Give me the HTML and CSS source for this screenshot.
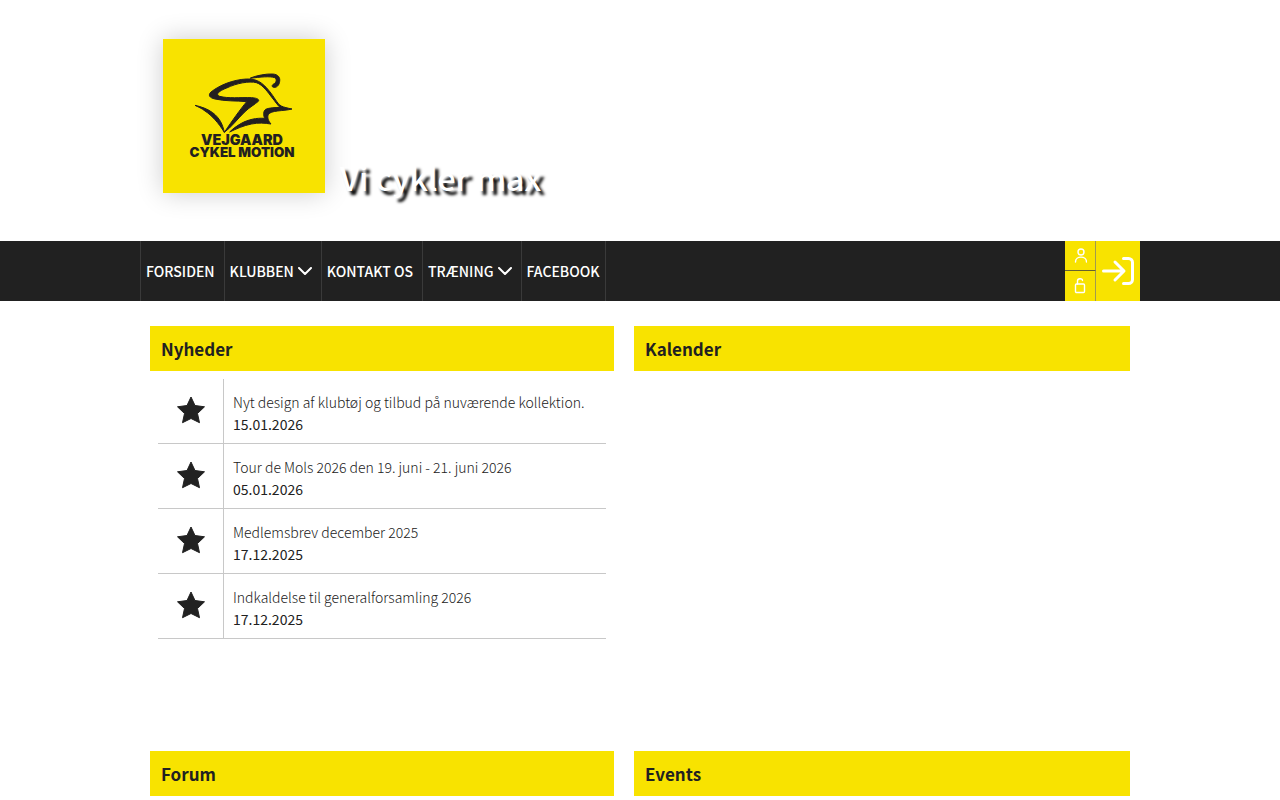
FILE: index.html
```html
<!DOCTYPE html>
<html lang="da">
<head>
    <meta charset="UTF-8">
    <meta name="viewport" content="width=device-width, initial-scale=1">
    <title>Vejgaard Cykel Motion</title>
    <link rel="stylesheet" href="styles.css">
</head>
<body>
    <header class="header">
        <div class="container header-inner">
            <a class="logo" href="#" aria-label="Vejgaard Cykel Motion">
                <svg viewBox="-51 -78 486 462">
                    <g fill="#231f20" stroke="#231f20" stroke-width="3" stroke-linejoin="round">
                        <path d="M211 39C232 31 258 26 278 27C294 28 301 37 299 49C298 60 290 69 281 67C275 66 275 60 281 57C289 53 292 43 284 38C270 33 240 36 211 40Z"/>
                        <path d="M336 132C322 129 312 127 304 123C291 116 284 97 267 77C246 51 229 41 199 42C158 44 116 62 93 81C84 90 87 98 105 102C135 109 169 107 200 110C180 134 158 165 133 202C154 187 174 160 194 141C207 128 226 117 235 109C239 103 231 99 215 98C180 97 145 101 119 94C104 88 119 77 140 69C171 54 207 48 229 53C249 59 265 84 277 99C286 110 292 120 300 127C285 128 267 128 257 133C249 139 250 151 254 160C229 158 204 164 184 175C170 183 159 191 149 201C170 191 190 182 214 177C235 173 254 174 273 177C265 168 261 157 265 149C272 135 310 139 336 132Z"/>
                        <path d="M45 121C64 125 83 132 98 143C119 159 128 178 133 202C116 174 95 151 75 138C65 130 55 126 45 121Z"/>
                    </g>
                    <text class="logo-text logo-name" x="186" y="240">VEJGAARD</text>
                    <text class="logo-text logo-sub" x="186" y="277">CYKEL MOTION</text>
                </svg>
            </a>
            <h1 class="slogan">Vi cykler max</h1>
        </div>
    </header>

    <nav class="navbar">
        <div class="container navbar-inner">
            <ul class="menu">
                <li><a href="#">FORSIDEN</a></li>
                <li><a href="#">KLUBBEN <svg class="chevron" viewBox="0 0 14 8"><path d="M1 1l6 6 6-6"/></svg></a></li>
                <li><a href="#">KONTAKT OS</a></li>
                <li><a href="#">TRÆNING <svg class="chevron" viewBox="0 0 14 8"><path d="M1 1l6 6 6-6"/></svg></a></li>
                <li><a href="#">FACEBOOK</a></li>
            </ul>
            <div class="login">
                <a class="login-user" href="#" aria-label="Bliv medlem">
                    <svg viewBox="0 0 14 16"><circle cx="8" cy="4" r="3"/><path d="M2.500 14c0-6.500 11-6.500 11 0"/></svg>
                </a>
                <a class="login-lock" href="#" aria-label="Glemt adgangskode">
                    <svg viewBox="0 0 14 16"><rect x="2.500" y="6" width="9" height="8.500" rx="1"/><path d="M4.500 6v-3c0-3 5-3 5-.5"/></svg>
                </a>
                <a class="login-enter" href="#" aria-label="Log ind">
                    <svg viewBox="0 0 32 30"><path d="M1.500 15h20M13 6l9 9-9 9M21.500 2.500h5a4 4 0 0 1 4 4v17a4 4 0 0 1-4 4h-5"/></svg>
                </a>
            </div>
        </div>
    </nav>

    <main class="container content">
        <section class="box">
            <h2>Nyheder</h2>
            <ul class="news">
                <li>
                    <span class="icon"><svg viewBox="0 1 28 28"><path d="M14 1l4 8.500 9.500 1.300-7 6.700 2 9.200-8.500-4.200-8.500 4.200 2-9.200-7-6.700 9.500-1.300z"/></svg></span>
                    <a href="#">Nyt design af klubtøj og tilbud på nuværende kollektion.<time>15.01.2026</time></a>
                </li>
                <li>
                    <span class="icon"><svg viewBox="0 1 28 28"><path d="M14 1l4 8.500 9.500 1.300-7 6.700 2 9.200-8.500-4.200-8.500 4.200 2-9.200-7-6.700 9.500-1.300z"/></svg></span>
                    <a href="#">Tour de Mols 2026 den 19. juni - 21. juni 2026<time>05.01.2026</time></a>
                </li>
                <li>
                    <span class="icon"><svg viewBox="0 1 28 28"><path d="M14 1l4 8.500 9.500 1.300-7 6.700 2 9.200-8.500-4.200-8.500 4.200 2-9.200-7-6.700 9.500-1.300z"/></svg></span>
                    <a href="#">Medlemsbrev december 2025<time>17.12.2025</time></a>
                </li>
                <li>
                    <span class="icon"><svg viewBox="0 1 28 28"><path d="M14 1l4 8.500 9.500 1.300-7 6.700 2 9.200-8.500-4.200-8.500 4.200 2-9.200-7-6.700 9.500-1.300z"/></svg></span>
                    <a href="#">Indkaldelse til generalforsamling 2026<time>17.12.2025</time></a>
                </li>
            </ul>
        </section>
        <section class="box">
            <h2>Kalender</h2>
        </section>
        <section class="box">
            <h2>Forum</h2>
        </section>
        <section class="box">
            <h2>Events</h2>
        </section>
    </main>
</body>
</html>
```
FILE: styles.css
```css
* {
    box-sizing: border-box;
}
body {
    margin: 0;
    font-family: 'Source Sans Pro', 'Noto Sans CJK SC', sans-serif;
    font-size: 14px;
    color: #212121;
    background: #fff;
}
a {
    color: inherit;
    text-decoration: none;
}
ul {
    list-style: none;
    margin: 0;
    padding: 0;
}
h1, h2 {
    margin: 0;
}
.container {
    max-width: 1000px;
    margin: 0 auto;
}

/* Header */
.header {
    padding: 39px 0 48px;
}
.header-inner {
    display: flex;
    align-items: flex-end;
    gap: 15px;
    padding: 0 23px;
}
.logo {
    width: 162px;
    height: 154px;
    background: #f8e300;
    box-shadow: 0 0 25px rgba(0, 0, 0, 0.2);
}
.logo svg {
    display: block;
    width: 100%;
    height: 100%;
}
.logo-text {
    font-family: Inter, sans-serif;
    font-weight: 900;
    text-anchor: middle;
    fill: #231f20;
}
.logo-name {
    font-size: 43px;
}
.logo-sub {
    font-size: 40px;
}
.slogan {
    font-size: 32px;
    font-weight: 500;
    line-height: 32px;
    color: #fff;
    text-shadow: 4px 4px 3px #000;
}

/* Navigation */
.navbar {
    background: #212121;
}
.navbar-inner {
    display: flex;
    justify-content: space-between;
    height: 60px;
}
.menu {
    display: flex;
}
.menu li {
    border-left: 1px solid #3a3a3a;
}
.menu li:last-child {
    border-right: 1px solid #3a3a3a;
}
.menu a {
    display: flex;
    align-items: center;
    gap: 4px;
    height: 100%;
    padding: 0 9px 0 5px;
    font-weight: 500;
    color: #fff;
}
.menu li:last-child a {
    padding-right: 5px;
}
.chevron {
    width: 14px;
    height: 8px;
}
.navbar svg {
    fill: none;
    stroke: #fff;
    stroke-width: 2;
    stroke-linecap: round;
    stroke-linejoin: round;
}
.login {
    display: grid;
    grid-template-columns: 31px 44px;
    grid-template-rows: 30px 30px;
}
.login a {
    display: flex;
    align-items: center;
    justify-content: center;
    background: #f8e300;
}
.login .login-user {
    border-right: 1px solid #a09a50;
    border-bottom: 1px solid #66622f;
}
.login .login-lock {
    grid-row: 2;
    border-right: 1px solid #a09a50;
}
.login .login-enter {
    grid-column: 2;
    grid-row: 1 / 3;
}
.login .login-user svg, .login .login-lock svg {
    width: 14px;
    height: 16px;
    stroke-width: 1.4;
}
.login .login-enter svg {
    width: 32px;
    height: 30px;
    stroke-width: 3;
}

/* Content */
.content {
    display: grid;
    grid-template-columns: 464fr 496fr;
    gap: 20px;
    padding: 25px 10px 0;
}
.box:nth-child(-n+2) {
    min-height: 405px;
}
.box h2 {
    padding: 0 11px;
    font-size: 17px;
    font-weight: 700;
    line-height: 45px;
    background: #f8e300;
}
.news {
    margin: 8px 8px 0;
}
.news li {
    display: flex;
    border-bottom: 1px solid #c8c8c8;
}
.icon {
    display: flex;
    flex: none;
    align-items: center;
    justify-content: center;
    width: 66px;
    border-right: 1px solid #c8c8c8;
}
.icon svg {
    width: 28px;
    height: 28px;
    fill: #212121;
    stroke: #212121;
    stroke-width: 1;
    stroke-linejoin: round;
}
.news a {
    padding: 12px 9px 8px;
    font-weight: 300;
    line-height: 22px;
}
.news time {
    display: block;
    font-weight: 400;
}
```
